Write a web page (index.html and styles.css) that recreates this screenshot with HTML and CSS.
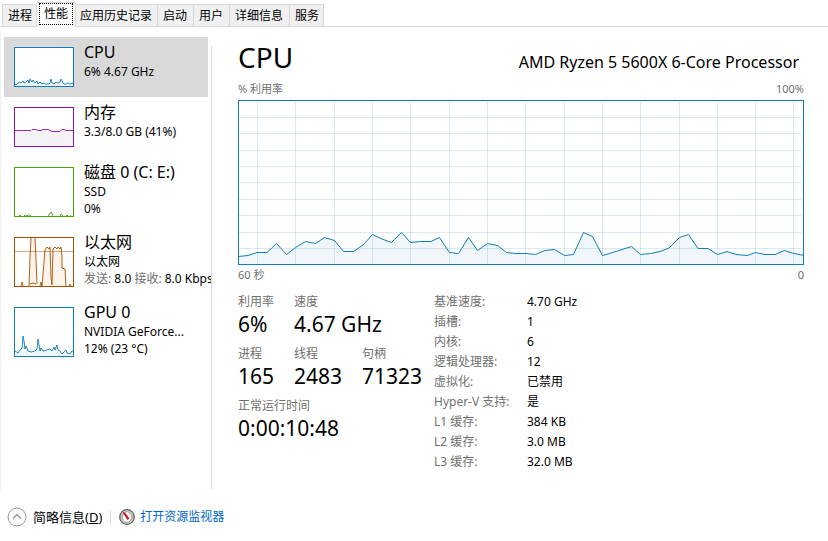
FILE: index.html
```html
<!DOCTYPE html>
<html lang="zh-CN">
<head>
<meta charset="utf-8">
<meta name="viewport" content="width=device-width, initial-scale=1">
<title>任务管理器</title>
<link rel="stylesheet" href="styles.css">
</head>
<body>
<nav class="tabs" role="tablist">
  <button class="tab" role="tab">进程</button>
  <button class="tab tab-active" role="tab" aria-selected="true"><span class="focus">性能</span></button>
  <button class="tab" role="tab">应用历史记录</button>
  <button class="tab" role="tab">启动</button>
  <button class="tab" role="tab">用户</button>
  <button class="tab" role="tab">详细信息</button>
  <button class="tab" role="tab">服务</button>
</nav>

<div class="pane">
  <aside class="devices">
    <button class="device device-active">
      <svg class="thumb blue" viewBox="0 0 60 40"><rect x=".5" y=".5" width="59" height="39"/><path class="area" d="M1 37.500H3L5 35L7 36L9 34L10 36L12 35L14 33L15 36L16 32L18 35L19 33L21 36L23 34L24 37L26 35L28 37L29 36L31 37H35L36 36L37 32L38 36L40 37L42 35L44 36L46 35L47 32L49 36L50 37H52L54 36L56 37L59 36V39H1Z"/><path class="line" d="M1 37.500H3L5 35L7 36L9 34L10 36L12 35L14 33L15 36L16 32L18 35L19 33L21 36L23 34L24 37L26 35L28 37L29 36L31 37H35L36 36L37 32L38 36L40 37L42 35L44 36L46 35L47 32L49 36L50 37H52L54 36L56 37L59 36"/></svg>
      <span class="device-text"><span class="device-name">CPU</span><span class="device-info">6% 4.67 GHz</span></span>
    </button>
    <button class="device">
      <svg class="thumb purple" viewBox="0 0 60 40"><rect x=".5" y=".5" width="59" height="39"/><path class="area" d="M1 23.500H59V39H1Z"/><path class="line" d="M1 23.500H17L18 22.500H22L24 23.500H27L29 22.500H34L36 23.500L38 24.500H46L48 22.500H50L52 23.500H59"/></svg>
      <span class="device-text"><span class="device-name">内存</span><span class="device-info">3.3/8.0 GB (41%)</span></span>
    </button>
    <button class="device">
      <svg class="thumb green" viewBox="0 0 60 50"><rect x=".5" y=".5" width="59" height="49"/><path class="line" d="M5 49L6 48L7 49M10 49L11 48L13 49L14 48L16 48L17 49M34 49L37 45L39 49M46 49L47 47L49 49M52 49L53 48L54 49M56 49L57 48"/></svg>
      <span class="device-text"><span class="device-name">磁盘 0 (C: E:)</span><span class="device-info">SSD</span><span class="device-info">0%</span></span>
    </button>
    <button class="device">
      <svg class="thumb orange" viewBox="0 0 60 50"><rect x=".5" y=".5" width="59" height="49"/><path class="area" d="M15 49L17 1H21L23 49ZM29 49L31 17L33 11L36 11L37 49ZM38 49L39 11H46L48 16L49 31L51 32L52 49Z"/><path class="threshold" d="M1 14.500H59"/><path class="line" d="M7 49L8 45L9 49M15 49L16 20L17 1M21 1L22 22L23 47M16 47L19 46L22 47M26 49L27 45L28 49L30 25L31 13L33 10L35 12L36 10L37 40L38 48L39 12L41 10L43 12L44 10L46 12L47 10L48 19L48 31L51 32L52 49M55 49L56 47L57 49"/></svg>
      <span class="device-text"><span class="device-name">以太网</span><span class="device-info">以太网</span><span class="device-info"><span class="muted">发送:</span> 8.0 <span class="muted">接收:</span> 8.0 Kbps</span></span>
    </button>
    <button class="device">
      <svg class="thumb blue" viewBox="0 0 60 50"><rect x=".5" y=".5" width="59" height="49"/><path class="area" d="M1 44L4 46L6 43L8 41L9 29L11 42L13 39L15 44L19 45L22 43L24 32L26 44L28 41L32 44L36 42L39 44L41 41L43 38L45 45L49 47L52 43L55 47L59 43V49H1Z"/><path class="line" d="M1 44L4 46L6 43L8 41L9 29L10 34L11 42L12 39L14 44L17 45L21 44L23 42L24 32L26 44L27 41L29 44L33 43L36 42L38 44L40 40L41 43L43 38L44 43L46 44L48 47L50 45L52 43L53 46L56 47L58 44L59 44"/></svg>
      <span class="device-text"><span class="device-name">GPU 0</span><span class="device-info">NVIDIA GeForce...</span><span class="device-info">12% (23 °C)</span></span>
    </button>
  </aside>

  <main class="detail">
    <header class="heading"><h1>CPU</h1><span class="model">AMD Ryzen 5 5600X 6-Core Processor</span></header>
    <div class="axis axis-top"><span>% 利用率</span><span>100%</span></div>
    <svg class="chart" viewBox="238 100 566 165" preserveAspectRatio="none" role="img" aria-label="CPU 利用率">
      <rect class="back" x="238" y="100" width="566" height="165"/>
      <path class="area" d="M238 256L248 255.500L257 252.500H267L276.500 243.500L286.500 254.500L295.500 247.500L305.500 241.500L315.500 243.500L324.500 237.500L334.500 240.500L343.500 251.500H353.500L363 245L372.500 234.500L382 239L391.500 242.500L401.500 232.500L410.500 242.500L421 241.500H431L439.500 237.500L449.500 252.500L458.500 253.500L468.500 237.500L477.500 250.500L487.500 243.500L497.500 245.500L506.500 252.500L516 253.500H526L535.500 254.500L545 250.500L554.500 249.500L564.500 255.500L573.500 254.500L583.500 232.500L592.500 236.500L602.500 255.500L611 253L631.500 246.500L640.500 254.500L650.500 253.500L660 251.500L669 248L679.500 237.500L688.500 234.500L698 248.500H708L717.500 254.500L727 251.500L736 254.500L747 255.500L755.500 252.500L765 254.500H775L784.500 250.500L794 253.500L804 255.500V264H238Z"/>
      <path class="grid" d="M257.500 101V264M295.500 101V264M334.500 101V264M372.500 101V264M410.500 101V264M449.500 101V264M487.500 101V264M525.500 101V264M564.500 101V264M602.500 101V264M640.500 101V264M679.500 101V264M717.500 101V264M755.500 101V264M793.500 101V264M239 117.500H802M239 133.500H802M239 150.500H802M239 166.500H802M239 182.500H802M239 199.500H802M239 215.500H802M239 232.500H802M239 248.500H802"/>
      <path class="line" d="M238 256.500L248 255.500L257 252.500H267L276.500 243.500L286.500 254.500L295.500 247.500L305.500 241.500L315.500 243.500L324.500 237.500L334.500 240.500L343.500 251.500H353.500L363 245L372.500 234.500L382 239L391.500 242.500L401.500 232.500L410.500 242.500L421 241.500H431L439.500 237.500L449.500 252.500L458.500 253.500L468.500 237.500L477.500 250.500L487.500 243.500L497.500 245.500L506.500 252.500L516 253.500H526L535.500 254.500L545 250.500L554.500 249.500L564.500 255.500L573.500 254.500L583.500 232.500L592.500 236.500L602.500 255.500L611 253L631.500 246.500L640.500 254.500L650.500 253.500L660 251.500L669 248L679.500 237.500L688.500 234.500L698 248.500H708L717.500 254.500L727 251.500L736 254.500L747 255.500L755.500 252.500L765 254.500H775L784.500 250.500L794 253.500L804 255.500"/>
      <rect class="frame" x="238.500" y="100.500" width="565" height="164"/>
    </svg>
    <div class="axis"><span>60 秒</span><span>0</span></div>

    <div class="figures">
      <dl class="stats">
        <div><dt>利用率</dt><dd>6%</dd></div>
        <div class="wide"><dt>速度</dt><dd>4.67 GHz</dd></div>
        <div><dt>进程</dt><dd>165</dd></div>
        <div><dt>线程</dt><dd>2483</dd></div>
        <div><dt>句柄</dt><dd>71323</dd></div>
        <div class="full"><dt>正常运行时间</dt><dd>0:00:10:48</dd></div>
      </dl>
      <dl class="specs">
        <dt>基准速度:</dt><dd>4.70 GHz</dd>
        <dt>插槽:</dt><dd>1</dd>
        <dt>内核:</dt><dd>6</dd>
        <dt>逻辑处理器:</dt><dd>12</dd>
        <dt>虚拟化:</dt><dd>已禁用</dd>
        <dt>Hyper-V 支持:</dt><dd>是</dd>
        <dt>L1 缓存:</dt><dd>384 KB</dd>
        <dt>L2 缓存:</dt><dd>3.0 MB</dd>
        <dt>L3 缓存:</dt><dd>32.0 MB</dd>
      </dl>
    </div>
  </main>
</div>

<footer class="footer">
  <button class="fewer">
    <svg width="20" height="20" viewBox="0 0 20 20" fill="none"><circle cx="10" cy="10" r="9" stroke="#999"/><path d="M6 11.500L10 7.500L14 11.500" stroke="#999" stroke-width="1.500"/></svg>
    <span>简略信息(<u>D</u>)</span>
  </button>
  <a class="monitor" href="#">
    <svg width="16" height="16" viewBox="0 0 16 16"><circle cx="8" cy="8" r="7.300" fill="#d4d2cd" stroke="#68635e" stroke-width="1.300"/><circle cx="8" cy="8" r="5.300" fill="#fff" stroke="#a9a49c"/><path d="M4.500 11A4.500 4.500 0 0 1 6 4M10 4A4.500 4.500 0 0 1 11.500 11" fill="none" stroke="#b8a99c"/><path d="M3.500 3L6 3.500L10.500 9.500L8.500 11Z" fill="#c4161c"/></svg>
    <span>打开资源监视器</span>
  </a>
</footer>
</body>
</html>
```
FILE: styles.css
```css
* { box-sizing: border-box; }

body {
  margin: 0;
  min-height: 100vh;
  display: flex;
  flex-direction: column;
  background: #fff;
  color: #000;
  font: 12px/20px "Noto Sans", "Noto Sans CJK SC", sans-serif;
}

button {
  margin: 0;
  padding: 0;
  border: 0;
  background: none;
  color: inherit;
  font: inherit;
  text-align: left;
}

h1, dl, dd { margin: 0; font-weight: 400; }

.tabs {
  display: flex;
  align-items: flex-end;
  height: 27px;
  padding-left: 2px;
  border-bottom: 1px solid #d9d9d9;
}

.tab {
  height: 22px;
  padding: 0 6px 0 5px;
  border: solid #d9d9d9;
  border-width: 1px 1px 0 0;
  background: #f0f0f0;
  white-space: nowrap;
}

.tab:first-child { border-left-width: 1px; padding-right: 4px; }
.tab:last-child { padding-right: 4px; }

.tab-active {
  height: 25px;
  margin-bottom: -1px;
  padding: 0 2px 2px;
  background: #fff;
}

.focus {
  display: block;
  padding: 0 4px;
  border: 1px dotted #000;
}

.tab-active + .tab { padding: 0 5px 0 4px; }

.pane {
  flex: 1;
  display: flex;
  margin-top: 3px;
  border-left: 1px solid #f0f0f0;
}

.devices {
  flex: none;
  width: 211px;
  padding: 7px 0 0 3px;
  overflow: hidden;
  border-right: 1px solid #d9d9d9;
  border-image: linear-gradient(transparent 17px, #d9d9d9 17px) 1;
  margin-bottom: 3px;
}

.device {
  display: flex;
  gap: 10px;
  width: 204px;
  padding: 0 0 0 10px;
}

.device-active { background: #d9d9d9; }

.thumb {
  flex: none;
  width: 60px;
  margin: 10px 0;
  fill: #fff;
  stroke: var(--ink);
}

.blue { --ink: #117dbb; --wash: #f1f6fa; }
.purple { --ink: #8b12ae; --wash: #f4f2f4; }
.green { --ink: #4da60c; --wash: #eff7e9; }
.orange { --ink: #a74f01; --wash: #fcf3eb; }

.thumb .area { fill: var(--wash); stroke: none; }
.thumb .line { fill: none; stroke-opacity: .9; }
.thumb .threshold { stroke: #d3a780; }

.device-text { padding-top: 5px; white-space: nowrap; }
.device-name { display: block; font-size: 16px; line-height: 21px; }
.device-info { display: block; line-height: 17px; }
.muted { color: #707070; }

.detail {
  flex: 1;
  min-width: 0;
  padding: 7px 24px 0 26px;
}

.heading {
  display: flex;
  justify-content: space-between;
  align-items: baseline;
  height: 41px;
  padding-right: 5px;
  line-height: 40px;
}

h1 { font-size: 28px; }
.model { font-size: 16px; }

.axis {
  display: flex;
  justify-content: space-between;
  color: #707070;
  font-size: 11px;
  line-height: 20px;
}

.axis-top { line-height: 22px; }

.chart { display: block; width: 100%; height: 165px; }
.chart .back { fill: #fff; }
.chart .area { fill: #f1f6fa; }
.chart .grid { fill: none; stroke: #117dbb; stroke-opacity: .16; }
.chart .line { fill: none; stroke: #117dbb; }
.chart .frame { fill: none; stroke: #117dbb; }

.figures {
  display: flex;
  gap: 12px;
  padding-top: 7px;
}

.stats {
  display: grid;
  grid-template-columns: 56px 68px 60px;
  grid-auto-rows: 52px;
  align-content: start;
  white-space: nowrap;
}

.stats .wide { grid-column: span 2; }
.stats .full { grid-column: span 3; }
.stats dt { color: #707070; line-height: 20px; }
.stats dd { font-size: 21px; line-height: 24px; }

.specs {
  display: grid;
  grid-template-columns: 93px auto;
  grid-auto-rows: 20px;
  white-space: nowrap;
}

.specs dt { color: #707070; }

.footer {
  display: flex;
  align-items: center;
  height: 49px;
  padding-left: 7px;
}

.fewer {
  display: flex;
  align-items: center;
  gap: 6px;
  padding-right: 8px;
  font-size: 13px;
}

.monitor {
  display: flex;
  align-items: center;
  gap: 5px;
  height: 14px;
  padding-left: 8px;
  border-left: 1px solid #d9d9d9;
  color: #0066cc;
  text-decoration: none;
}
```
